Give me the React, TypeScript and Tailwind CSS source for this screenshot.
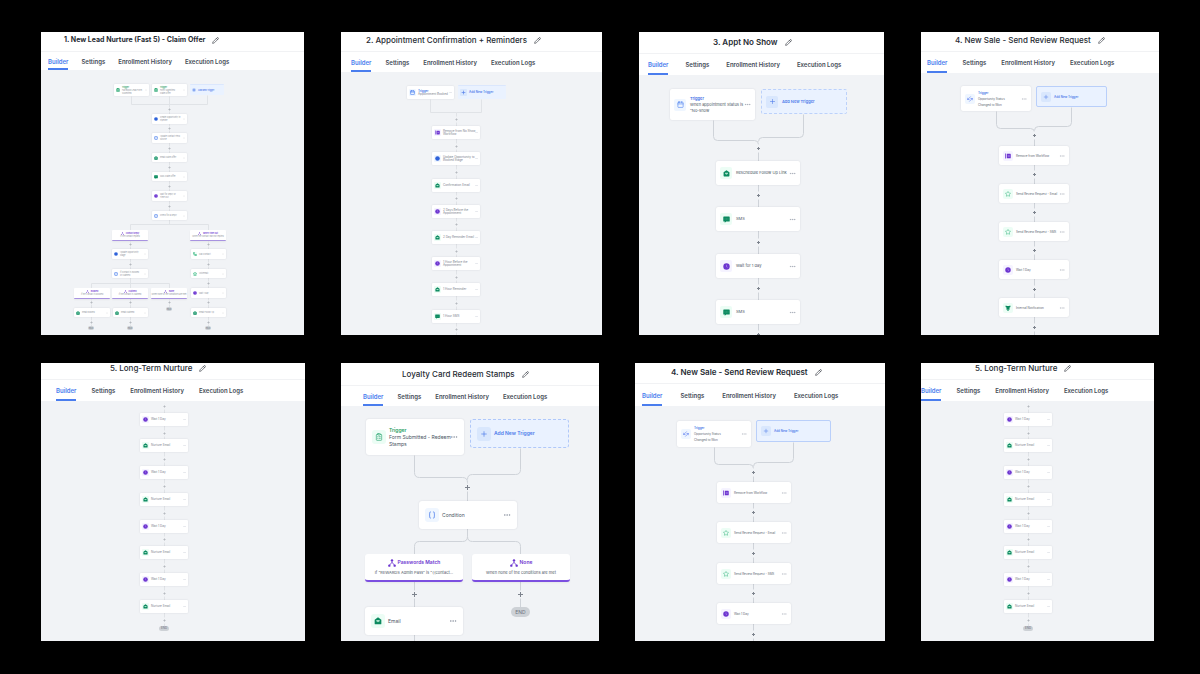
import type { ReactNode } from "react";
import { ArrowLeftRight, Braces, Calendar, ClipboardList, Ellipsis, Pencil, Phone, Plus, Star } from "lucide-react";
import clsx from "clsx";

type Size = "xs" | "sm" | "md" | "lg" | "xl";
type IconName =
  | "mail" | "sms" | "wait" | "remove" | "star" | "bell" | "calendar"
  | "opportunity" | "form" | "condition" | "update" | "phone" | "branch";

interface FlowNode {
  kind?: "step" | "trigger" | "add" | "branch" | "end";
  x: number;
  y: number;
  w: number;
  h: number;
  icon?: IconName;
  title?: string;
  lines?: string[];
  green?: boolean;
}

interface Flow {
  size: Size;
  height: number;
  nodes: FlowNode[];
  edges: string[];
  plus: [number, number][];
}

const TEXT: Record<Size, string> = {
  xs: "text-[2px] leading-[3px]",
  sm: "text-[3px] leading-[3px]",
  md: "text-[3px] leading-[6px]",
  lg: "text-[4px] leading-[6px]",
  xl: "text-[5px] leading-[7px]",
};

const INK: Record<Size, string> = {
  xs: "text-[#8f959e]",
  sm: "text-[#7c838e]",
  md: "text-[#626974]",
  lg: "text-[#4b5563]",
  xl: "text-[#4b5563]",
};

const DOTS: Record<Size, string> = {
  xs: "size-[2px] text-[#d8dbe0]",
  sm: "size-[3px] text-[#d0d4da]",
  md: "size-[6px] text-[#b4b9c2]",
  lg: "size-[7px] text-[#9aa1ac]",
  xl: "size-[8px] text-[#8b93a0]",
};

const ADD_BORDER: Record<Size, string> = {
  xs: "border-t border-[#dbe7fd]",
  sm: "border-t border-[#dbe7fd]",
  md: "border border-[#b9cffa]",
  lg: "border border-dashed border-[#bcd1fa]",
  xl: "border border-dashed border-[#b0c8f9]",
};

const PAD: Record<Size, string> = {
  xs: "pl-[2px] pr-[2px] gap-[2px] rounded-[1px]",
  sm: "pl-[2px] pr-[2px] gap-[2px] rounded-[1px]",
  md: "pl-[4px] pr-[4px] gap-[3px] rounded-[2px]",
  lg: "pl-[4px] pr-[4px] gap-[4px] rounded-[2px]",
  xl: "pl-[6px] pr-[6px] gap-[3px] rounded-[3px]",
};

const TILE: Record<Size, string> = {
  xs: "size-[4px] rounded-[1px]",
  sm: "size-[7px] rounded-[1px]",
  md: "size-[10px] rounded-[2px]",
  lg: "size-[12px] rounded-[2px]",
  xl: "size-[14px] rounded-[3px]",
};

const ICON: Record<Size, string> = {
  xs: "size-[4px] stroke-[4]",
  sm: "size-[5px] stroke-[3]",
  md: "size-[6px]",
  lg: "size-[7px]",
  xl: "size-[8px]",
};

const TONE: Record<IconName, string> = {
  mail: "bg-emerald-50 text-[#0b8a5f]",
  sms: "bg-emerald-50 text-[#0b8a5f]",
  star: "bg-emerald-50 text-[#35b37e]",
  bell: "bg-emerald-50 text-[#0b8a5f]",
  form: "bg-emerald-50 text-[#2fa874]",
  phone: "bg-emerald-50 text-[#35b37e]",
  wait: "bg-violet-50 text-[#6d35d0]",
  remove: "bg-violet-50 text-[#6d35d0]",
  branch: "text-[#6d35d0]",
  update: "bg-blue-50 text-[#2f62d9]",
  calendar: "bg-blue-50 text-[#4a80f0]",
  opportunity: "bg-blue-50 text-[#4a6ff0]",
  condition: "bg-blue-50 text-[#3b6fe8]",
};

const SvgIcon = ({ className, children }: { className: string; children: ReactNode }) => (
  <svg viewBox="0 0 24 24" className={className} fill="currentColor">
    {children}
  </svg>
);

const NodeIcon = ({ name, className }: { name: IconName; className: string }) => {
  switch (name) {
    case "mail":
      return (
        <SvgIcon className={className}>
          <path d="M12 1 2 8v12a2 2 0 0 0 2 2h16a2 2 0 0 0 2-2V8z" />
          <path d="M7 9h10v4l-5 3-5-3z" fill="#a8e0c8" />
        </SvgIcon>
      );
    case "sms":
      return (
        <SvgIcon className={className}>
          <path d="M3 2h18a2 2 0 0 1 2 2v13a2 2 0 0 1-2 2H11l-5 4v-4H3a2 2 0 0 1-2-2V4a2 2 0 0 1 2-2z" />
          <path d="M6 9h2v2H6zm5 0h2v2h-2zm5 0h2v2h-2z" fill="#a8e0c8" />
        </SvgIcon>
      );
    case "wait":
      return (
        <SvgIcon className={className}>
          <circle cx="12" cy="12" r="11" />
          <path d="M12 6v7l4 2" fill="none" stroke="#b79df0" strokeWidth="2" />
        </SvgIcon>
      );
    case "remove":
      return (
        <SvgIcon className={className}>
          <path d="M1 2h3v20H1zM7 3h14a2 2 0 0 1 2 2v14a2 2 0 0 1-2 2H7z" />
          <path d="m12 9 6 6m0-6-6 6" stroke="#cdbbf6" strokeWidth="2" />
        </SvgIcon>
      );
    case "bell":
      return (
        <SvgIcon className={className}>
          <path d="M3 2l5 2h8l5-2 1 6-4 2v9H6v-9L2 8zM9 20h6v3H9z" />
        </SvgIcon>
      );
    case "update":
      return (
        <SvgIcon className={className}>
          <circle cx="12" cy="12" r="11" />
        </SvgIcon>
      );
    case "branch":
      return (
        <SvgIcon className={className}>
          <path d="M12 5v6M12 10 4 19M12 10l8 9" fill="none" stroke="currentColor" strokeWidth="2.5" />
          <circle cx="12" cy="4" r="3.5" />
          <circle cx="4" cy="20" r="3.5" />
          <circle cx="20" cy="20" r="3.5" />
        </SvgIcon>
      );
    case "star":
      return <Star className={className} />;
    case "calendar":
      return <Calendar className={className} />;
    case "opportunity":
      return <ArrowLeftRight className={clsx(className, "-rotate-45")} />;
    case "form":
      return <ClipboardList className={className} />;
    case "condition":
      return <Braces className={className} />;
    case "phone":
      return <Phone className={className} />;
  }
};

const NodeCard = ({ node, size }: { node: FlowNode; size: Size }) => {
  const box = { left: node.x, top: node.y, width: node.w, height: node.h };

  if (node.kind === "end") {
    return (
      <div
        style={box}
        className={clsx(
          "absolute flex items-center justify-center rounded-full bg-[#cdd1d6] text-[#6b727d]",
          TEXT[size]
        )}
      >
        END
      </div>
    );
  }

  if (node.kind === "add") {
    return (
      <button
        style={box}
        className={clsx(
          "absolute flex items-center bg-[#eaf2ff] text-[#4d7aea] font-semibold whitespace-nowrap",
          ADD_BORDER[size],
          PAD[size],
          TEXT[size]
        )}
      >
        <span className={clsx("flex shrink-0 items-center justify-center bg-[#d9e7fd]", TILE[size])}>
          <Plus className={ICON[size]} />
        </span>
        Add New Trigger
      </button>
    );
  }

  if (node.kind === "branch") {
    return (
      <div
        style={box}
        className={clsx(
          "absolute flex flex-col items-center justify-center bg-white whitespace-nowrap shadow-xs",
          size === "xs"
            ? "border-b border-[#a893e0] rounded-[1px]"
            : "border-b-2 border-[#7c4fe0] rounded-[3px] gap-[2px]",
          TEXT[size]
        )}
      >
        <div className="flex items-center gap-[2px] font-semibold text-[#6d35d0]">
          <NodeIcon name="branch" className={size === "xs" ? "size-[3px]" : ICON[size]} />
          {node.title}
        </div>
        <p className={clsx(INK[size], size === "xl" && "text-[4px]")}>{node.lines?.[0]}</p>
      </div>
    );
  }

  return (
    <div
      style={box}
      className={clsx("absolute flex items-center bg-white shadow-[0_0_2px_rgba(16,24,40,0.12)]", PAD[size], TEXT[size])}
    >
      {node.icon && (
        <span className={clsx("flex shrink-0 items-center justify-center", TILE[size], TONE[node.icon])}>
          <NodeIcon name={node.icon} className={ICON[size]} />
        </span>
      )}
      <div className={clsx("flex-1 min-w-0 whitespace-nowrap", INK[size])}>
        {node.title && (
          <p className={clsx("font-semibold", node.green ? "text-[#1f9d63]" : "text-[#3f6fe6]")}>{node.title}</p>
        )}
        {node.lines?.map((line) => <p key={line}>{line}</p>)}
      </div>
      <Ellipsis className={clsx("shrink-0", DOTS[size])} />
    </div>
  );
};

const Canvas = ({ flow }: { flow: Flow }) => {
  const small = flow.size === "xs" || flow.size === "sm";
  const arm = flow.size === "xl" ? 2.5 : small ? 1 : 1.5;
  const gap = flow.size === "xs" ? 2 : flow.size === "sm" ? 3 : 4;
  return (
    <div className="relative flex-1 overflow-hidden bg-[#f1f3f6]" style={{ minHeight: flow.height }}>
      <svg className="absolute inset-0 size-full" fill="none">
        {flow.edges.map((d) => (
          <path key={d} d={d} stroke={small ? "#e0e3e7" : "#cfd3d9"} transform="translate(.5 .5)" />
        ))}
        {flow.plus.map(([x, y]) => (
          <g key={`${x}-${y}`} transform={`translate(${x + 0.5} ${y + 0.5})`}>
            <rect x={-2} y={-gap} width={4} height={gap * 2} fill="#f1f3f6" />
            <path d={`M${-arm} 0H${arm}M0 ${-arm}V${arm}`} stroke={small ? "#b4b8bf" : "#7d838d"} />
          </g>
        ))}
      </svg>
      {flow.nodes.map((node) => (
        <NodeCard key={`${node.x}-${node.y}`} node={node} size={flow.size} />
      ))}
    </div>
  );
};

const leadFlow: Flow = {
  size: "xs",
  height: 265,
  nodes: [
    { kind: "trigger", x: 73, y: 14, w: 35, h: 12, icon: "form", title: "Trigger", green: true, lines: ["Facebook Lead Form", "Submitted"] },
    { kind: "trigger", x: 111, y: 14, w: 35, h: 12, icon: "form", title: "Trigger", green: true, lines: ["Form Submitted", "Claim Offer"] },
    { kind: "add", x: 149, y: 14, w: 34, h: 11 },
    { x: 111, y: 44, w: 35, h: 10, icon: "update", lines: ["Create Opportunity in", "Pipeline"] },
    { x: 111, y: 63, w: 35, h: 10, icon: "condition", lines: ["Update Contact Field", "Source"] },
    { x: 111, y: 83, w: 35, h: 9, icon: "mail", lines: ["Email Claim Offer"] },
    { x: 111, y: 102, w: 35, h: 9, icon: "sms", lines: ["SMS Claim Offer"] },
    { x: 111, y: 121, w: 35, h: 10, icon: "wait", lines: ["Wait for Reply or", "Time Out"] },
    { x: 111, y: 141, w: 35, h: 9, icon: "condition", lines: ["Check for a Reply"] },
    { kind: "branch", x: 71, y: 160, w: 36, h: 11, title: "Contact Reply", lines: ["If the contact replied"] },
    { kind: "branch", x: 149, y: 160, w: 36, h: 11, title: "When Time Out", lines: ["When the contact has not replied"] },
    { x: 71, y: 179, w: 36, h: 10, icon: "update", lines: ["Update Opportunity", "Stage"] },
    { x: 71, y: 199, w: 36, h: 9, icon: "condition", lines: ["If Contact is Booked", "or Claimed"] },
    { x: 150, y: 179, w: 35, h: 10, icon: "phone", lines: ["Call Contact"] },
    { x: 150, y: 199, w: 35, h: 9, icon: "star", lines: ["Voicemail"] },
    { x: 150, y: 218, w: 35, h: 10, icon: "wait", lines: ["Wait 1 Day"] },
    { x: 150, y: 238, w: 35, h: 9, icon: "mail", lines: ["Email Follow Up"] },
    { kind: "branch", x: 33, y: 218, w: 36, h: 11, title: "Booked", lines: ["If the contact is booked"] },
    { kind: "branch", x: 71, y: 218, w: 36, h: 11, title: "Claimed", lines: ["If the contact is claimed"] },
    { kind: "branch", x: 110, y: 218, w: 36, h: 11, title: "None", lines: ["When none of the conditions are met"] },
    { x: 33, y: 238, w: 36, h: 9, icon: "mail", lines: ["Email Booked"] },
    { x: 72, y: 238, w: 35, h: 9, icon: "mail", lines: ["Email Claimed"] },
    { kind: "end", x: 125, y: 237, w: 6, h: 4 },
    { kind: "end", x: 47, y: 256, w: 6, h: 4 },
    { kind: "end", x: 86, y: 256, w: 6, h: 4 },
    { kind: "end", x: 164, y: 256, w: 6, h: 4 },
  ],
  edges: [
    "M90 26V34H128", "M166 25V34H128", "M128 26V154", "M89 160V154H167V160",
    "M89 171V256", "M167 171V256", "M50 218V213H128V218", "M50 229V256", "M128 229V237",
  ],
  plus: [
    [128, 39], [128, 58], [128, 78], [128, 97], [128, 116], [128, 136],
    [89, 174], [89, 194], [167, 174], [167, 194], [167, 213], [167, 232], [167, 252],
    [50, 232], [89, 232], [128, 232], [50, 252], [89, 252],
  ],
};

const appointmentFlow: Flow = {
  size: "sm",
  height: 263,
  nodes: [
    { kind: "trigger", x: 66, y: 14, w: 47, h: 13, icon: "calendar", title: "Trigger", lines: ["Appointment Booked"] },
    { kind: "add", x: 117, y: 13, w: 48, h: 14 },
    { x: 91, y: 54, w: 48, h: 13, icon: "remove", lines: ["Remove from No Show", "Workflow"] },
    { x: 91, y: 80, w: 48, h: 13, icon: "update", lines: ["Update Opportunity to", "Booked Stage"] },
    { x: 91, y: 107, w: 48, h: 13, icon: "mail", lines: ["Confirmation Email"] },
    { x: 91, y: 133, w: 48, h: 13, icon: "wait", lines: ["2 Days Before the", "Appointment"] },
    { x: 91, y: 159, w: 48, h: 13, icon: "mail", lines: ["2 Day Reminder Email"] },
    { x: 91, y: 185, w: 48, h: 13, icon: "wait", lines: ["1 Hour Before the", "Appointment"] },
    { x: 91, y: 211, w: 48, h: 13, icon: "mail", lines: ["1 Hour Reminder"] },
    { x: 91, y: 238, w: 48, h: 13, icon: "sms", lines: ["1 Hour SMS"] },
  ],
  edges: ["M89 27V40H115V54", "M140 27V40H115", "M115 54V263"],
  plus: [[115, 47], [115, 74], [115, 100], [115, 126], [115, 152], [115, 179], [115, 205], [115, 231], [115, 257]],
};

const noShowFlow: Flow = {
  size: "lg",
  height: 260,
  nodes: [
    { kind: "trigger", x: 31, y: 14, w: 85, h: 31, icon: "calendar", title: "Trigger", lines: ["When appointment Status is", "\"No-show"] },
    { kind: "add", x: 122, y: 14, w: 86, h: 25 },
    { x: 77, y: 86, w: 84, h: 24, icon: "mail", lines: ["Reschedule Follow Up Link"] },
    { x: 77, y: 132, w: 84, h: 24, icon: "sms", lines: ["SMS"] },
    { x: 77, y: 179, w: 84, h: 24, icon: "wait", lines: ["Wait for 1 day"] },
    { x: 77, y: 225, w: 84, h: 24, icon: "sms", lines: ["SMS"] },
  ],
  edges: ["M74 45V61Q74 65 78 65H115Q119 65 119 69V260", "M164 39V58Q164 62 160 62H123Q119 62 119 66"],
  plus: [[119, 73], [119, 120], [119, 167], [119, 213], [119, 259]],
};

const reviewFlow: Flow = {
  size: "md",
  height: 262,
  nodes: [
    { kind: "trigger", x: 40, y: 13, w: 70, h: 25, icon: "opportunity", title: "Trigger", lines: ["Opportunity Status", "Changed to Won"] },
    { kind: "add", x: 115, y: 13, w: 71, h: 21 },
    { x: 78, y: 73, w: 70, h: 19, icon: "remove", lines: ["Remove from Workflow"] },
    { x: 78, y: 111, w: 70, h: 19, icon: "star", lines: ["Send Review Request - Email"] },
    { x: 78, y: 149, w: 70, h: 19, icon: "star", lines: ["Send Review Request - SMS"] },
    { x: 78, y: 187, w: 70, h: 19, icon: "wait", lines: ["Wait 1 Day"] },
    { x: 78, y: 225, w: 70, h: 19, icon: "bell", lines: ["Internal Notification"] },
  ],
  edges: ["M75 38V51Q75 55 79 55H109Q113 55 113 59V262", "M150 34V49Q150 53 146 53H117Q113 53 113 57"],
  plus: [[113, 62], [113, 101], [113, 139], [113, 177], [113, 216], [113, 254]],
};

const reviewFlowWide: Flow = {
  size: "md",
  height: 235,
  nodes: [
    { kind: "trigger", x: 42, y: 15, w: 74, h: 26, icon: "opportunity", title: "Trigger", lines: ["Opportunity Status", "Changed to Won"] },
    { kind: "add", x: 121, y: 14, w: 75, h: 22 },
    { x: 82, y: 76, w: 74, h: 21, icon: "remove", lines: ["Remove from Workflow"] },
    { x: 82, y: 116, w: 74, h: 21, icon: "star", lines: ["Send Review Request - Email"] },
    { x: 82, y: 157, w: 74, h: 21, icon: "star", lines: ["Send Review Request - SMS"] },
    { x: 82, y: 197, w: 74, h: 21, icon: "wait", lines: ["Wait 1 Day"] },
  ],
  edges: ["M79 41V54Q79 58 83 58H114Q118 58 118 62V235", "M158 36V52Q158 56 154 56H122Q118 56 118 60"],
  plus: [[118, 66], [118, 106], [118, 147], [118, 187], [118, 228]],
};

const loyaltyFlow: Flow = {
  size: "xl",
  height: 235,
  nodes: [
    { kind: "trigger", x: 25, y: 13, w: 98, h: 36, icon: "form", title: "Trigger", green: true, lines: ["Form Submitted - Redeem", "Stamps"] },
    { kind: "add", x: 129, y: 13, w: 99, h: 29 },
    { x: 78, y: 95, w: 98, h: 28, icon: "condition", lines: ["Condition"] },
    { kind: "branch", x: 24, y: 148, w: 98, h: 28, title: "Passwords Match", lines: ["If \"REWARDS Admin Pass\" is \"{{contact..."] },
    { kind: "branch", x: 131, y: 148, w: 98, h: 28, title: "None", lines: ["When none of the conditions are met"] },
    { x: 24, y: 201, w: 98, h: 28, icon: "mail", lines: ["Email"] },
    { kind: "end", x: 170, y: 201, w: 19, h: 10 },
  ],
  edges: [
    "M73 49V66Q73 71 78 71H121Q126 71 126 76V130Q126 135 121 135H78Q73 135 73 140V235",
    "M179 42V63Q179 68 174 68H131Q126 68 126 73",
    "M126 130Q126 135 131 135H174Q179 135 179 140V201",
  ],
  plus: [[126, 81], [73, 188], [179, 188]],
};

const NURTURE_TOPS = [12, 38, 65, 92, 119, 145, 172, 199];

// Same column of wait / email steps, shifted to where the canvas is scrolled.
const nurtureFlow = (x: number): Flow => ({
  size: "sm",
  height: 240,
  nodes: [
    ...NURTURE_TOPS.map((y, i): FlowNode => ({
      x,
      y,
      w: 48,
      h: 13,
      icon: i % 2 ? "mail" : "wait",
      lines: [i % 2 ? "Nurture Email" : "Wait 1 Day"],
    })),
    { kind: "end", x: x + 19, y: 225, w: 10, h: 5 },
  ],
  edges: [`M${x + 24} 2V225`],
  plus: [5, 32, 58, 85, 112, 138, 165, 192, 219].map((y): [number, number] => [x + 24, y]),
});

const TABS = ["Builder", "Settings", "Enrollment History", "Execution Logs"];

interface PanelProps {
  title: string;
  titleClass: string;
  tabsClass: string;
  flow: Flow;
}

const Panel = ({ title, titleClass, tabsClass, flow }: PanelProps) => (
  <section className="flex flex-col min-w-0 overflow-hidden bg-white">
    <header className={clsx("flex shrink-0 items-end gap-[7px] pb-[6px] border-b border-[#f1f2f4] whitespace-nowrap", titleClass)}>
      <h2 className="leading-[10px] text-[#262b33]">{title}</h2>
      <button aria-label="Rename" className="flex h-[10px] items-center">
        <Pencil className="size-[7px] text-[#262b33]" />
      </button>
    </header>
    <nav className={clsx("flex shrink-0 whitespace-nowrap text-[6px] font-semibold text-[#454c57]", tabsClass)}>
      {TABS.map((tab, i) => (
        <button
          key={tab}
          className={clsx("pt-[2px] border-b-2", i === 0 ? "border-[#4a7dee] text-[#4a7dee]" : "border-transparent")}
        >
          {tab}
        </button>
      ))}
    </nav>
    <Canvas flow={flow} />
  </section>
);

export default function App() {
  return (
    <main className="min-h-screen space-y-[28px] bg-black py-[32px] pl-[41px] font-['Inter',sans-serif]">
      <div className="grid grid-cols-[263fr_261fr_245fr_238fr] gap-[37px] pr-[41px]">
        <Panel title="1. New Lead Nurture (Fast 5) - Claim Offer" titleClass="h-[20px] pl-[23px] text-[7px] font-bold" tabsClass="h-[18px] pl-[7px] gap-[13px]" flow={leadFlow} />
        <Panel title="2. Appointment Confirmation + Reminders" titleClass="h-[20px] pl-[25px] text-[8px] font-medium" tabsClass="h-[20px] pl-[10px] gap-[14px]" flow={appointmentFlow} />
        <Panel title="3. Appt No Show" titleClass="h-[22px] pl-[74px] text-[8px] font-semibold" tabsClass="h-[21px] pl-[9px] gap-[17px]" flow={noShowFlow} />
        <Panel title="4. New Sale - Send Review Request" titleClass="h-[20px] pl-[34px] text-[8px] font-medium" tabsClass="h-[21px] pl-[6px] gap-[15px]" flow={reviewFlow} />
      </div>
      <div className="grid grid-cols-[264fr_258fr_250fr_233fr] gap-[36px] pr-[46px]">
        <Panel title="5. Long-Term Nurture" titleClass="h-[17px] pl-[69px] text-[8px] font-medium" tabsClass="h-[21px] pl-[15px] gap-[15px]" flow={nurtureFlow(99)} />
        <Panel title="Loyalty Card Redeem Stamps" titleClass="h-[23px] pl-[61px] text-[8px] font-medium" tabsClass="h-[20px] pl-[22px] gap-[14px]" flow={loyaltyFlow} />
        <Panel title="4. New Sale - Send Review Request" titleClass="h-[21px] pl-[36px] text-[8px] font-semibold" tabsClass="h-[22px] pl-[7px] gap-[18px]" flow={reviewFlowWide} />
        <Panel title="5. Long-Term Nurture" titleClass="h-[17px] pl-[54px] text-[8px] font-medium" tabsClass="h-[21px] gap-[15px]" flow={nurtureFlow(83)} />
      </div>
    </main>
  );
}
